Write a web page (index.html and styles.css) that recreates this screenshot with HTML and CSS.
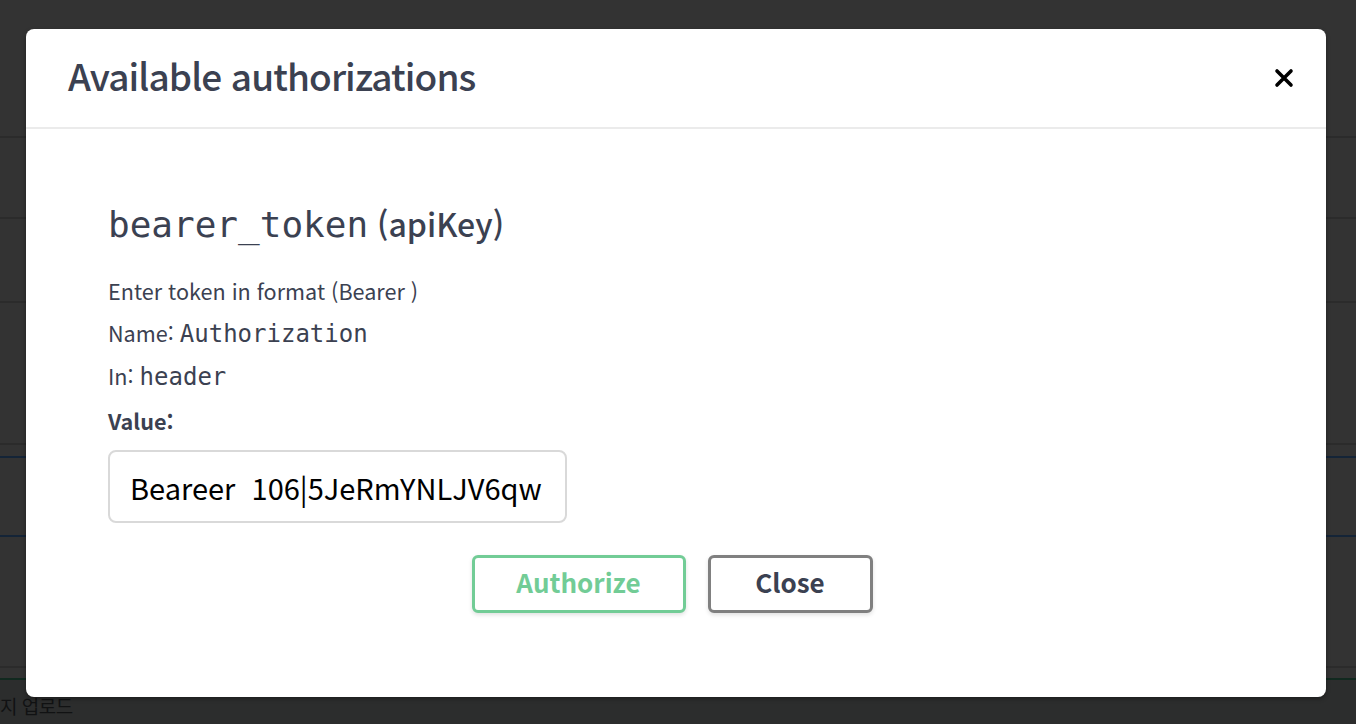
FILE: index.html
```html
<!DOCTYPE html>
<html lang="ko">
<head>
<meta charset="utf-8">
<title>Available authorizations</title>
<link rel="stylesheet" href="styles.css">
</head>
<body>
<div class="backdrop">
  <div class="bg-row r1"></div>
  <div class="bg-row r2"></div>
  <div class="bg-row r3"></div>
  <div class="bg-row r4"></div>
  <div class="bg-row r5 blue"></div>
  <div class="bg-row r6 blue"></div>
  <div class="bg-row r7"></div>
  <div class="bg-row r8 green"></div>
  <div class="bg-text">지 업로드</div>
</div>

<div class="modal">
  <div class="modal-header">
    <h3 class="modal-title">Available authorizations</h3>
    <button class="close-x" aria-label="Close">
      <svg width="20" height="20" viewBox="0 0 20 20"><path d="M3 3 L17 17 M17 3 L3 17" stroke="#000" stroke-width="3.6" stroke-linecap="round"/></svg>
    </button>
  </div>
  <div class="modal-content">
    <h4 class="auth-title"><code>bearer_token</code> (apiKey)</h4>
    <p class="line">Enter token in format (Bearer )</p>
    <p class="line">Name: <code>Authorization</code></p>
    <p class="line">In: <code>header</code></p>
    <label class="value-label">Value:</label>
    <input class="value-input" type="text" value="Beareer  106|5JeRmYNLJV6qw">
    <div class="btn-wrap">
      <button class="btn authorize">Authorize</button>
      <button class="btn close">Close</button>
    </div>
  </div>
</div>
</body>
</html>
```

FILE: styles.css
```css
html, body {
  margin: 0;
  padding: 0;
}
body {
  background: #333333;
  width: 1356px;
  height: 724px;
  overflow: hidden;
  position: relative;
  font-family: "Noto Sans CJK KR", "Noto Sans", sans-serif;
  color: #3b4151;
}
.backdrop {
  display: flex;
  flex-direction: column;
}
.bg-row {
  border-bottom: 2px solid #2b2b2b;
  box-sizing: border-box;
}
.r1 { height: 138px; }
.r2 { height: 81px; }
.r3 { height: 84px; }
.r4 { height: 142px; }
.r5 { height: 13px; }
.r6 { height: 79px; }
.r7 { height: 131px; }
.r8 { height: 12px; }
.blue { border-bottom-color: #142437; }
.green { border-bottom-color: #11291f; }
.bg-text {
  background: #2c2d2d;
  height: 45px;
  font-size: 19px;
  color: #111213;
  padding-top: 14px;
  line-height: 24px;
  letter-spacing: -0.5px;
}

.modal {
  position: absolute;
  left: 26px;
  top: 29px;
  width: 1300px;
  height: 668px;
  background: #ffffff;
  border-radius: 8px;
  box-shadow: 0 2px 4px rgba(0,0,0,0.35);
  overflow: hidden;
}
.modal-header {
  height: 100px;
  box-sizing: border-box;
  border-bottom: 2px solid #ebebeb;
  display: flex;
  align-items: center;
  padding: 0 32px 0 42px;
}
.modal-title {
  flex: 1;
  margin: -6px 0 0 0;
  font-size: 37px;
  font-weight: 500;
  color: #3b4151;
  letter-spacing: -0.9px;
}
.close-x {
  border: none;
  background: none;
  padding: 0;
  width: 20px;
  height: 20px;
  display: flex;
}
.modal-content {
  padding: 72px 82px 0 82px;
}
.auth-title {
  margin: 0 0 23px 0;
  font-size: 32px;
  font-weight: 500;
  line-height: 44px;
  color: #3b4151;
}
code {
  font-family: "DejaVu Sans Mono", monospace;
  font-weight: 400;
}
.auth-title code {
  font-size: 36px;
}
.line {
  margin: 0;
  font-size: 21.6px;
  line-height: 42px;
  color: #3b4151;
}
.line code {
  font-size: 24px;
}
.value-label {
  display: block;
  font-size: 21.6px;
  font-weight: 700;
  line-height: 42px;
  margin-top: 2px;
}
.value-input {
  display: block;
  margin-top: 8px;
  width: 459px;
  height: 73px;
  box-sizing: border-box;
  border: 2px solid #d9d9d9;
  border-radius: 8px;
  padding: 0 20px;
  font-family: "Noto Sans CJK KR", "Noto Sans", sans-serif;
  font-size: 29px;
  color: #000;
  outline: none;
}
.btn-wrap {
  display: flex;
  justify-content: center;
  gap: 22px;
  margin-top: 32px;
  padding-right: 8px;
}
.btn {
  height: 58px;
  box-sizing: border-box;
  border-radius: 6px;
  background: #fff;
  font-family: "Noto Sans CJK KR", "Noto Sans", sans-serif;
  font-size: 26px;
  font-weight: 700;
  box-shadow: 0 2px 4px rgba(0,0,0,0.12);
  padding: 0 0 5px 0;
}
.authorize {
  width: 214px;
  border: 3px solid #72cc96;
  color: #72cc96;
}
.close {
  width: 165px;
  border: 3px solid #808080;
  color: #3b4151;
}
```
